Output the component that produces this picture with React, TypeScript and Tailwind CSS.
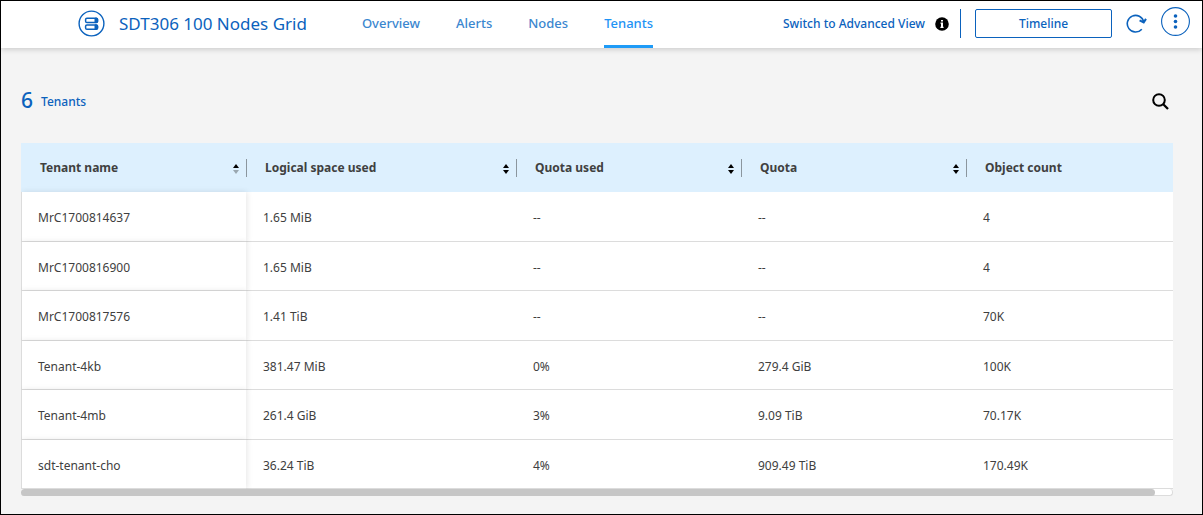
import { useState } from 'react'

const tabs = ['Overview', 'Alerts', 'Nodes', 'Tenants']

const columns = ['Tenant name', 'Logical space used', 'Quota used', 'Quota', 'Object count']

const tenants = [
  { name: 'MrC1700814637', space: '1.65 MiB', quotaUsed: '--', quota: '--', objects: '4' },
  { name: 'MrC1700816900', space: '1.65 MiB', quotaUsed: '--', quota: '--', objects: '4' },
  { name: 'MrC1700817576', space: '1.41 TiB', quotaUsed: '--', quota: '--', objects: '70K' },
  { name: 'Tenant-4kb', space: '381.47 MiB', quotaUsed: '0%', quota: '279.4 GiB', objects: '100K' },
  { name: 'Tenant-4mb', space: '261.4 GiB', quotaUsed: '3%', quota: '9.09 TiB', objects: '70.17K' },
  { name: 'sdt-tenant-cho', space: '36.24 TiB', quotaUsed: '4%', quota: '909.49 TiB', objects: '170.49K' },
]

const GridLogo = () => (
  <svg className="size-[27px] shrink-0" viewBox="0 0 27 27" fill="none" stroke="#0b62bd">
    <circle cx="13.5" cy="13.5" r="12.4" strokeWidth="1.4" />
    <rect x="7.6" y="8.2" width="12" height="4.4" rx="1.4" strokeWidth="1.5" />
    <rect x="7.6" y="14.9" width="12" height="4.4" rx="1.4" strokeWidth="1.5" />
    <path d="M17 8.2h1.6a1 1 0 0 1 1 1v2.4a1 1 0 0 1-1 1H17zM17 14.9h1.6a1 1 0 0 1 1 1v2.4a1 1 0 0 1-1 1H17z" fill="#0b62bd" strokeWidth="1" />
  </svg>
)

const InfoIcon = () => (
  <svg className="size-[14px]" viewBox="0 0 14 14">
    <circle cx="7" cy="7" r="6.8" fill="#000" />
    <path d="M6 3h2v1.5H6zM5.5 5.5H8v4.2h.6V11H5.4V9.7H6V6.8h-.5z" fill="#fff" />
  </svg>
)

const RefreshIcon = () => (
  <svg className="h-[20px] w-[21px]" viewBox="0 0 21 20" fill="none" stroke="#0b62bd" strokeWidth="1.6">
    <path d="M15.8 15.2A8.3 8.3 0 1 1 17.7 8" />
    <path d="M13.6 6.3L17.7 8.4L20 4.9" strokeWidth="2" />
  </svg>
)

const MoreIcon = () => (
  <svg className="size-[29px]" viewBox="0 0 29 29" fill="#0b62bd">
    <circle cx="14.5" cy="14.5" r="13.9" fill="none" stroke="#0b62bd" strokeWidth="1.1" />
    <circle cx="14.5" cy="9" r="1.8" />
    <circle cx="14.5" cy="14.5" r="1.8" />
    <circle cx="14.5" cy="20" r="1.8" />
  </svg>
)

const SearchIcon = () => (
  <svg className="size-[17px]" viewBox="0 0 17 17" fill="none" stroke="#000" strokeWidth="2">
    <circle cx="7" cy="7" r="5.8" />
    <path d="M11 11l5 5" strokeWidth="2.3" />
  </svg>
)

const SortIcon = ({ ascending }: { ascending: boolean }) => (
  <svg className="h-[10px] w-[6px]" viewBox="0 0 6 10">
    <path d="M3 0L6 4H0z" fill="#000" />
    <path d="M0 6h6L3 10z" fill={ascending ? '#9aa7b0' : '#000'} />
  </svg>
)

const Header = () => {
  const [active, setActive] = useState('Tenants')

  return (
    <header className="relative flex h-[47px] shrink-0 items-center bg-white pr-3 pl-[77px] shadow-[0_1px_6px_rgba(0,0,0,0.2)]">
      <div className="mb-[2px] flex items-center gap-[14px] whitespace-nowrap">
        <GridLogo />
        <h1 className="text-[17px] text-[#0b62bd]">SDT306 100 Nodes Grid</h1>
      </div>

      <nav className="ml-[55px] flex h-full gap-9">
        {tabs.map((tab) => (
          <a
            key={tab}
            href="#"
            onClick={() => setActive(tab)}
            className={
              tab === active
                ? 'flex items-center border-b-3 border-[#1e9bf7] pt-[2px] text-[13px] font-medium text-[#1e93f5]'
                : 'flex items-center border-b-3 border-transparent pt-[2px] text-[13px] font-medium text-[#3b87cf]'
            }
          >
            {tab}
          </a>
        ))}
      </nav>

      <div className="mb-[2px] ml-auto flex items-center whitespace-nowrap text-xs font-medium text-[#0b62bd]">
        <a href="#">Switch to Advanced View</a>
        <button aria-label="About this view" className="ml-[10px]"><InfoIcon /></button>
        <div className="ml-[11px] h-[29px] w-px bg-[#0b62bd]" />
        <button className="ml-[14px] h-[29px] w-[137px] rounded-[2px] border border-[#0b62bd]">Timeline</button>
        <button aria-label="Refresh" className="ml-[14px]"><RefreshIcon /></button>
        <button aria-label="More actions" className="mb-1 ml-[14px]"><MoreIcon /></button>
      </div>
    </header>
  )
}

const TenantTable = () => {
  return (
    <div>
      <div className="overflow-hidden">
        <table className="w-full min-w-[1170px] table-fixed border-separate border-spacing-0 text-left text-xs text-[#404040]">
          <colgroup>
            <col className="w-[225px]" />
            <col className="w-[270px]" />
            <col className="w-[225px]" />
            <col className="w-[225px]" />
            <col />
          </colgroup>
          <thead>
            <tr className="h-[49px] bg-[#ddf0fe]">
              {columns.map((column, i) => (
                <th key={column} className="p-0 pt-px font-bold">
                  <div className={i < 4 ? '-mr-px flex h-[18px] items-center justify-between border-r border-[#8b969e] pr-[7px] pl-[19px]' : 'flex h-[18px] items-center pl-[19px]'}>
                    <span>{column}</span>
                    {i < 4 && (
                      <button aria-label={`Sort by ${column}`} className="pt-[2px]"><SortIcon ascending={i === 0} /></button>
                    )}
                  </div>
                </th>
              ))}
            </tr>
          </thead>
          <tbody>
            {tenants.map((tenant) => (
              <tr key={tenant.name} className="bg-white odd:h-[50px] even:h-[49px]">
                <td className="relative border-b border-l border-[#dcdcdc] bg-white p-0 pt-[3px] pl-4 shadow-[1px_0_6px_rgba(0,0,0,0.1)]">{tenant.name}</td>
                <td className="border-b border-[#dcdcdc] p-0 pt-[3px] pl-[17px]">{tenant.space}</td>
                <td className="border-b border-[#dcdcdc] p-0 pt-[3px] pl-[17px]">{tenant.quotaUsed}</td>
                <td className="border-b border-[#dcdcdc] p-0 pt-[3px] pl-[17px]">{tenant.quota}</td>
                <td className="border-b border-[#dcdcdc] p-0 pt-[3px] pl-[17px]">{tenant.objects}</td>
              </tr>
            ))}
          </tbody>
        </table>
      </div>
      <div className="h-[7px] rounded-full border-r border-b border-[#dcdcdc] bg-white">
        <div className="h-[7px] w-[1134px] max-w-full rounded-full bg-[#c6c6c6]" />
      </div>
    </div>
  )
}

const App = () => {
  return (
    <div className="flex min-h-screen flex-col border border-black bg-[#f4f4f4] font-['Noto_Sans',sans-serif]">
      <Header />
      <main className="pt-9 pr-[29px] pb-4 pl-5">
        <div className="mb-[25px] flex h-[34px] items-center justify-between pr-1">
          <h2 className="mb-[2px] flex items-center gap-2 text-[#0b62bd]">
            <span className="text-[21px] leading-[34px] font-medium">6</span>
            <span className="pt-1 text-xs font-medium">Tenants</span>
          </h2>
          <button aria-label="Search tenants"><SearchIcon /></button>
        </div>
        <TenantTable />
      </main>
    </div>
  )
}

export default App
